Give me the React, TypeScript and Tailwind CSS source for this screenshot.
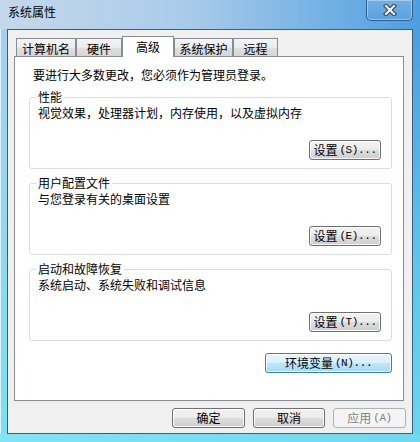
import React from 'react';

const btnBase =
  "h-[20px] rounded-[3px] border text-[12px] leading-[14px] flex items-center justify-center shadow-[inset_0_0_0_1px_rgba(255,255,255,0.85)]";
const btnNormal =
  "border-[#707070] bg-[linear-gradient(to_bottom,#f2f2f2_0%,#ebebeb_50%,#dddddd_50%,#cfcfcf_100%)] text-black";
const btnDefault =
  "border-[#3c7fb1] bg-[linear-gradient(to_bottom,#eaf6fd_0%,#d9f0fc_50%,#bee6fd_50%,#a7d9f5_100%)] text-black";
const btnDisabled =
  "border-[#adb2b5] bg-[#f4f4f4] text-[#838383] shadow-none";

interface WinButtonProps {
  label: string;
  width: string;
  kind?: 'normal' | 'default' | 'disabled';
}

// split "设置(S)..." into the CJK part and the half-width mnemonic part
function WinButton({ label, width, kind = 'normal' }: WinButtonProps) {
  const look = kind === 'default' ? btnDefault : kind === 'disabled' ? btnDisabled : btnNormal;
  const cut = label.indexOf('(');
  const head = cut >= 0 ? label.slice(0, cut) : label;
  const tail = cut >= 0 ? label.slice(cut) : '';
  return (
    <div className={`${btnBase} ${look} ${width}`}>
      <span>{head}</span>
      {tail && <span className="font-['Liberation_Mono',monospace] text-[11px] tracking-[-0.4px] ml-[2px]">{tail}</span>}
    </div>
  );
}

interface GroupProps {
  title: string;
  text: string;
  button: string;
  className?: string;
}

function Group({ title, text, button, className = '' }: GroupProps) {
  return (
    <fieldset className={`ml-[14px] w-[363px] border border-[#d5dfe5] rounded-[3px] pl-[8px] pr-[10px] pb-[8px] ${className}`}>
      <legend className="-ml-[2px] px-[2px] leading-[14px]">{title}</legend>
      <p className="mt-[2px] leading-[14px]">{text}</p>
      <div className="flex justify-end mt-[20px]">
        <WinButton label={button} width="w-[72px]" />
      </div>
    </fieldset>
  );
}

const tabs = ['计算机名', '硬件', '高级', '系统保护', '远程'];
const tabWidths = ['w-[60px]', 'w-[46px]', 'w-[52px]', 'w-[59px]', 'w-[45px]'];

export default function App() {
  return (
    <div className="w-[420px] h-[442px] overflow-hidden flex flex-col font-['Noto_Sans_CJK_SC',sans-serif] text-[12px] text-black bg-[linear-gradient(to_bottom,#a6cdec,#74c8ec_55%,#80e2f2)]">
      {/* title bar */}
      <div className="h-[29px] flex justify-between items-start bg-[linear-gradient(to_right,#c4d8eb_0%,#a9cbea_45%,#4d9fe1_100%)]">
        <span className="pl-[8px] pt-[5px] leading-[14px] text-black">系统属性</span>
        <div className="mr-[7px] w-[47px] h-[21px] rounded-b-[5px] border border-t-0 border-[#2f5f8e] shadow-[inset_0_0_0_1px_rgba(255,255,255,0.35)] bg-[linear-gradient(to_bottom,#74afe4,#5aa2e0)] flex items-center justify-center">
          <svg width="16" height="12" viewBox="0 0 16 12">
            <path d="M4 2 L12 10 M12 2 L4 10" stroke="#2b3b55" strokeWidth="4.2" strokeLinecap="square" fill="none" />
            <path d="M4 2 L12 10 M12 2 L4 10" stroke="#ffffff" strokeWidth="2.2" strokeLinecap="square" fill="none" />
          </svg>
        </div>
      </div>

      {/* body */}
      <div className="flex h-[405px]">
        <div className="w-[7px] bg-[linear-gradient(to_bottom,#a8d0ee,#7ae0f2)] border-l border-[#dff3fb]" />
        <div className="w-[406px] border border-[#3d5d7b] bg-[#f0f0f0] flex flex-col">
          {/* tab strip */}
          <div className="pt-[6px] pl-[8px]">
            <div className="flex items-end h-[20px]">
              {tabs.map((t, i) =>
                i === 2 ? (
                  <div
                    key={t}
                    className={`${tabWidths[i]} h-[21px] -mb-px relative z-10 bg-white border border-b-0 border-[#898c95] flex justify-center pt-[3px] leading-[14px]`}
                  >
                    {t}
                  </div>
                ) : (
                  <div
                    key={t}
                    className={`${tabWidths[i]} h-[18px] border border-b-0 border-[#898c95] bg-[linear-gradient(to_bottom,#f4f4f4_0%,#ececec_50%,#e0e0e0_50%,#d6d6d6_100%)] flex justify-center pt-[3px] leading-[14px]`}
                  >
                    {t}
                  </div>
                )
              )}
            </div>
          </div>

          {/* panel */}
          <div className="ml-[6px] w-[390px] h-[345px] border border-[#898c95] bg-white">
            <p className="pl-[18px] pt-[11px] leading-[14px]">要进行大多数更改，您必须作为管理员登录。</p>
            <Group className="mt-[8px]" title="性能" text="视觉效果，处理器计划，内存使用，以及虚拟内存" button="设置(S)..." />
            <Group className="mt-[7px]" title="用户配置文件" text="与您登录有关的桌面设置" button="设置(E)..." />
            <Group className="mt-[7px]" title="启动和故障恢复" text="系统启动、系统失败和调试信息" button="设置(T)..." />
            <div className="ml-[14px] w-[363px] flex justify-end mt-[12px]">
              <WinButton label="环境变量(N)..." width="w-[127px]" kind="default" />
            </div>
          </div>

          {/* dialog buttons */}
          <div className="mt-[7px] flex justify-end gap-[8px] pr-[6px]">
            <WinButton label="确定" width="w-[73px]" />
            <WinButton label="取消" width="w-[72px]" />
            <WinButton label="应用(A)" width="w-[73px]" kind="disabled" />
          </div>
        </div>
        <div className="w-[7px] bg-[linear-gradient(to_bottom,#4c9fe0,#5fc6ea_60%,#6ad6ee)]" />
      </div>
      <div className="h-[8px] bg-[linear-gradient(to_right,#82e3f3,#70d8ef)]" />
    </div>
  );
}
